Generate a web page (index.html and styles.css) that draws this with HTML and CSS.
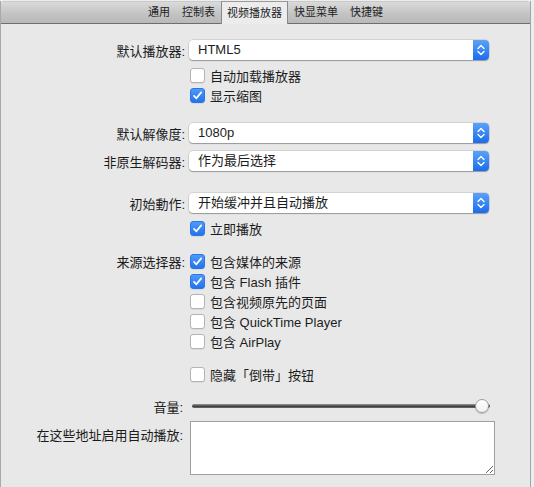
FILE: index.html
```html
<!doctype html>
<html lang="zh-CN">
  <head>
    <meta charset="UTF-8" />
    <meta name="viewport" content="width=device-width, initial-scale=1.0" />
    <title>视频播放器 - 偏好设置</title>
    <link rel="stylesheet" href="styles.css">
  </head>
  <body>
    <div class="window">
      <!-- Tab strip -->
      <nav class="tabs">
        <span class="tab">通用</span>
        <span class="tab">控制表</span>
        <span class="tab active">视频播放器</span>
        <span class="tab">快显菜单</span>
        <span class="tab">快捷键</span>
      </nav>

      <div class="pane">
        <div class="row">
          <label class="label">默认播放器:</label>
          <div class="select"><span class="value">HTML5</span><span class="stepper"></span></div>
        </div>
        <div class="row check-row first">
          <span class="label"></span>
          <span class="check"><span class="box"></span>自动加载播放器</span>
        </div>
        <div class="row check-row">
          <span class="label"></span>
          <span class="check"><span class="box on"></span>显示缩图</span>
        </div>

        <div class="row gap-lg">
          <label class="label">默认解像度:</label>
          <div class="select"><span class="value">1080p</span><span class="stepper"></span></div>
        </div>
        <div class="row gap-sm">
          <label class="label">非原生解码器:</label>
          <div class="select"><span class="value">作为最后选择</span><span class="stepper"></span></div>
        </div>

        <div class="row gap-xl">
          <label class="label">初始動作:</label>
          <div class="select"><span class="value">开始缓冲并且自动播放</span><span class="stepper"></span></div>
        </div>
        <div class="row check-row first">
          <span class="label"></span>
          <span class="check"><span class="box on"></span>立即播放</span>
        </div>

        <div class="row check-row group">
          <span class="label">来源选择器:</span>
          <span class="check"><span class="box on"></span>包含媒体的来源</span>
        </div>
        <div class="row check-row">
          <span class="label"></span>
          <span class="check"><span class="box on"></span>包含 Flash 插件</span>
        </div>
        <div class="row check-row">
          <span class="label"></span>
          <span class="check"><span class="box"></span>包含视频原先的页面</span>
        </div>
        <div class="row check-row">
          <span class="label"></span>
          <span class="check"><span class="box"></span>包含 QuickTime Player</span>
        </div>
        <div class="row check-row">
          <span class="label"></span>
          <span class="check"><span class="box"></span>包含 AirPlay</span>
        </div>

        <div class="row check-row group">
          <span class="label"></span>
          <span class="check"><span class="box"></span>隐藏「倒带」按钮</span>
        </div>

        <div class="row slider-row">
          <span class="label narrow">音量:</span>
          <div class="slider"><span class="knob"></span></div>
        </div>

        <div class="row area-row">
          <span class="label narrow">在这些地址启用自动播放:</span>
          <textarea class="area"></textarea>
        </div>
      </div>
    </div>
  </body>
</html>
```

FILE: styles.css
```css
:root {
  --color-bg: #e8e8e8;
  --color-text: #1c1c1c;
  --color-blue-top: #5aa2f9;
  --color-blue-bottom: #1c6cec;
}

body {
  margin: 0;
  background-color: #ededed;
  font-family: 'Liberation Sans', 'Noto Sans CJK SC', sans-serif;
  font-size: 13px;
  color: var(--color-text);
}

.window {
  width: 529px;
  height: 487px;
  background-color: var(--color-bg);
  border-left: 1px solid #a9a9a9;
  border-right: 1px solid #a4a4a4;
}

/* Tab strip */
.tabs {
  display: flex;
  justify-content: center;
  height: 21px;
  margin-top: 1px;
  background: linear-gradient(#dadada, #c2c2c2 60%, #b9b9b9);
  border-top: 1px solid #c9c9c9;
  border-bottom: 1px solid #6e6e6e;
  border-radius: 4px 4px 0 0;
  font-size: 11px;
}

.tab {
  padding: 0 6px;
  line-height: 21px;
  color: #222;
}

.tab.active {
  height: 22px;
  margin-top: -1px;
  line-height: 23px;
  padding: 0 5px;
  background: #ececec;
  border-left: 1px solid #8a8a8a;
  border-right: 1px solid #8a8a8a;
  border-top: 1px solid #9a9a9a;
}

/* Form */
.pane {
  padding-top: 16px;
}

.row {
  display: flex;
  align-items: center;
}

.label {
  width: 188px;
  flex: none;
  text-align: right;
  padding-right: 4px;
  box-sizing: border-box;
  white-space: nowrap;
}

.label.narrow {
  padding-right: 6px;
}

.gap-sm { margin-top: 8px; }
.gap-lg { margin-top: 18px; }
.gap-xl { margin-top: 22px; }

.select {
  display: flex;
  width: 300px;
  height: 20px;
  background: #fff;
  border-radius: 4px;
  box-shadow: 0 0 0 0.5px rgba(0, 0, 0, 0.18), 0 1px 1px rgba(0, 0, 0, 0.28);
}

.value {
  flex: 1;
  padding-left: 9px;
  line-height: 20px;
}

.stepper {
  width: 16px;
  border-radius: 0 4px 4px 0;
  background:
    url("data:image/svg+xml,%3Csvg xmlns='http://www.w3.org/2000/svg' width='16' height='20'%3E%3Cpath d='M5 8.5 8 5.5 11 8.5M5 11.5 8 14.5 11 11.5' fill='none' stroke='white' stroke-width='1.4' stroke-linecap='round' stroke-linejoin='round'/%3E%3C/svg%3E") center no-repeat,
    linear-gradient(var(--color-blue-top), var(--color-blue-bottom));
}

.check-row {
  height: 20px;
}

.check-row.first { margin-top: 5px; }
.check-row.group { margin-top: 13px; }

.check {
  display: flex;
  align-items: center;
  gap: 5px;
  padding-left: 1px;
}

.box {
  width: 13px;
  height: 13px;
  background: #fff;
  border: 1px solid #b4b4b4;
  border-radius: 3px;
  box-shadow: 0 1px 0 rgba(0, 0, 0, 0.06);
}

.box.on {
  border-color: #2a76e8;
  background:
    url("data:image/svg+xml,%3Csvg xmlns='http://www.w3.org/2000/svg' width='13' height='13'%3E%3Cpath d='M3 6.8 5.4 9.3 10.2 3.4' fill='none' stroke='white' stroke-width='1.7' stroke-linecap='round' stroke-linejoin='round'/%3E%3C/svg%3E") center no-repeat,
    linear-gradient(#4f9af9, #2473ec);
}

.slider-row {
  height: 20px;
  margin-top: 12px;
}

.slider {
  position: relative;
  width: 298px;
  height: 4px;
  margin-left: 3px;
  border-radius: 2px;
  background: linear-gradient(#9a9a9a, #3c3c3c 60%, #707070);
}

.knob {
  position: absolute;
  right: 1px;
  top: -5px;
  width: 14px;
  height: 14px;
  border-radius: 50%;
  background: linear-gradient(#ffffff, #f1f1f1);
  border: 1px solid #9c9c9c;
  box-sizing: border-box;
  box-shadow: 0 1px 1px rgba(0, 0, 0, 0.2);
}

.area-row {
  align-items: flex-start;
  margin-top: 5px;
}

.area-row .label {
  padding-top: 4px;
}

.area {
  width: 305px;
  height: 54px;
  margin: 0 0 0 1px;
  padding: 2px;
  box-sizing: border-box;
  border: 1px solid #9f9f9f;
  background: #fff;
  resize: both;
  font: inherit;
}
```
